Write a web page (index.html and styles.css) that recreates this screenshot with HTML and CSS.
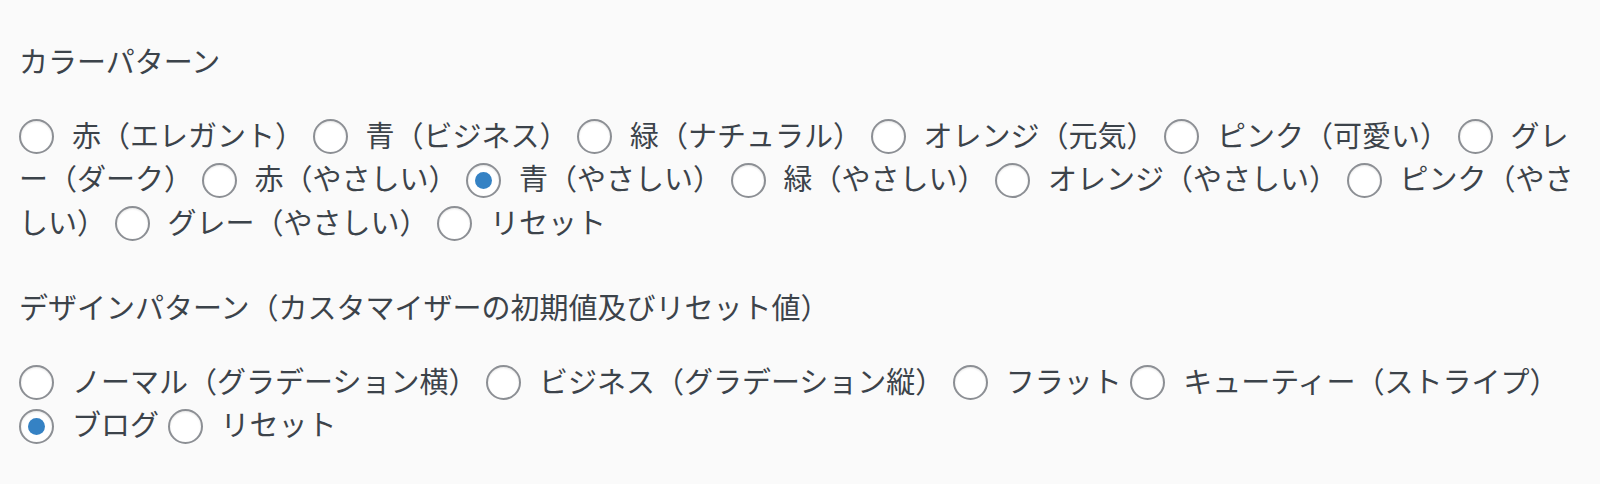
FILE: index.html
```html
<!DOCTYPE html>
<html lang="ja">
<head>
<meta charset="utf-8">
<title>Patterns</title>
<link rel="stylesheet" href="styles.css">
</head>
<body>
<div class="page">
  <section class="group">
    <p class="group-title">カラーパターン</p>
    <div class="options">
      <label class="opt"><input type="radio" name="color" class="radio">赤（エレガント）</label>
      <label class="opt"><input type="radio" name="color" class="radio">青（ビジネス）</label>
      <label class="opt"><input type="radio" name="color" class="radio">緑（ナチュラル）</label>
      <label class="opt"><input type="radio" name="color" class="radio">オレンジ（元気）</label>
      <label class="opt"><input type="radio" name="color" class="radio">ピンク（可愛い）</label>
      <label class="opt"><input type="radio" name="color" class="radio">グレー（ダーク）</label>
      <label class="opt"><input type="radio" name="color" class="radio">赤（やさしい）</label>
      <label class="opt"><input type="radio" name="color" class="radio" checked>青（やさしい）</label>
      <label class="opt"><input type="radio" name="color" class="radio">緑（やさしい）</label>
      <label class="opt"><input type="radio" name="color" class="radio">オレンジ（やさしい）</label>
      <label class="opt"><input type="radio" name="color" class="radio">ピンク（やさしい）</label>
      <label class="opt"><input type="radio" name="color" class="radio">グレー（やさしい）</label>
      <label class="opt"><input type="radio" name="color" class="radio">リセット</label>
    </div>
  </section>
  <section class="group">
    <p class="group-title">デザインパターン（カスタマイザーの初期値及びリセット値）</p>
    <div class="options">
      <label class="opt"><input type="radio" name="design" class="radio">ノーマル（グラデーション横）</label>
      <label class="opt"><input type="radio" name="design" class="radio">ビジネス（グラデーション縦）</label>
      <label class="opt"><input type="radio" name="design" class="radio">フラット</label>
      <label class="opt"><input type="radio" name="design" class="radio">キューティー（ストライプ）</label>
      <label class="opt"><input type="radio" name="design" class="radio" checked>ブログ</label>
      <label class="opt"><input type="radio" name="design" class="radio">リセット</label>
    </div>
  </section>
</div>
</body>
</html>
```

FILE: styles.css
```css
html, body {
  margin: 0;
  padding: 0;
  background: #fafafa;
}

body {
  font-family: "Noto Sans CJK JP", "Noto Sans", sans-serif;
  font-size: 29px;
  line-height: 43.5px;
  color: #3c434a;
}

.page {
  padding: 39px 20px 0 19px;
}

.group {
  margin: 0 0 42px;
}

.group-title {
  margin: 0 0 30px;
  font-weight: 400;
}

.options {
  margin: 0;
  line-break: normal;
  word-spacing: 2px;
}

.opt {
  cursor: pointer;
}

.radio {
  -webkit-appearance: none;
  appearance: none;
  box-sizing: border-box;
  width: 35px;
  height: 35px;
  margin: -4px 18px 0 0;
  vertical-align: middle;
  border: 2px solid #8c8f94;
  border-radius: 50%;
  background: #fff;
  box-shadow: inset 0 1px 2px rgba(0, 0, 0, 0.1);
  position: relative;
  display: inline-block;
}

.radio:checked::before {
  content: "";
  position: absolute;
  left: 7px;
  top: 7px;
  width: 17px;
  height: 17px;
  border-radius: 50%;
  background: #3582c4;
}
```
